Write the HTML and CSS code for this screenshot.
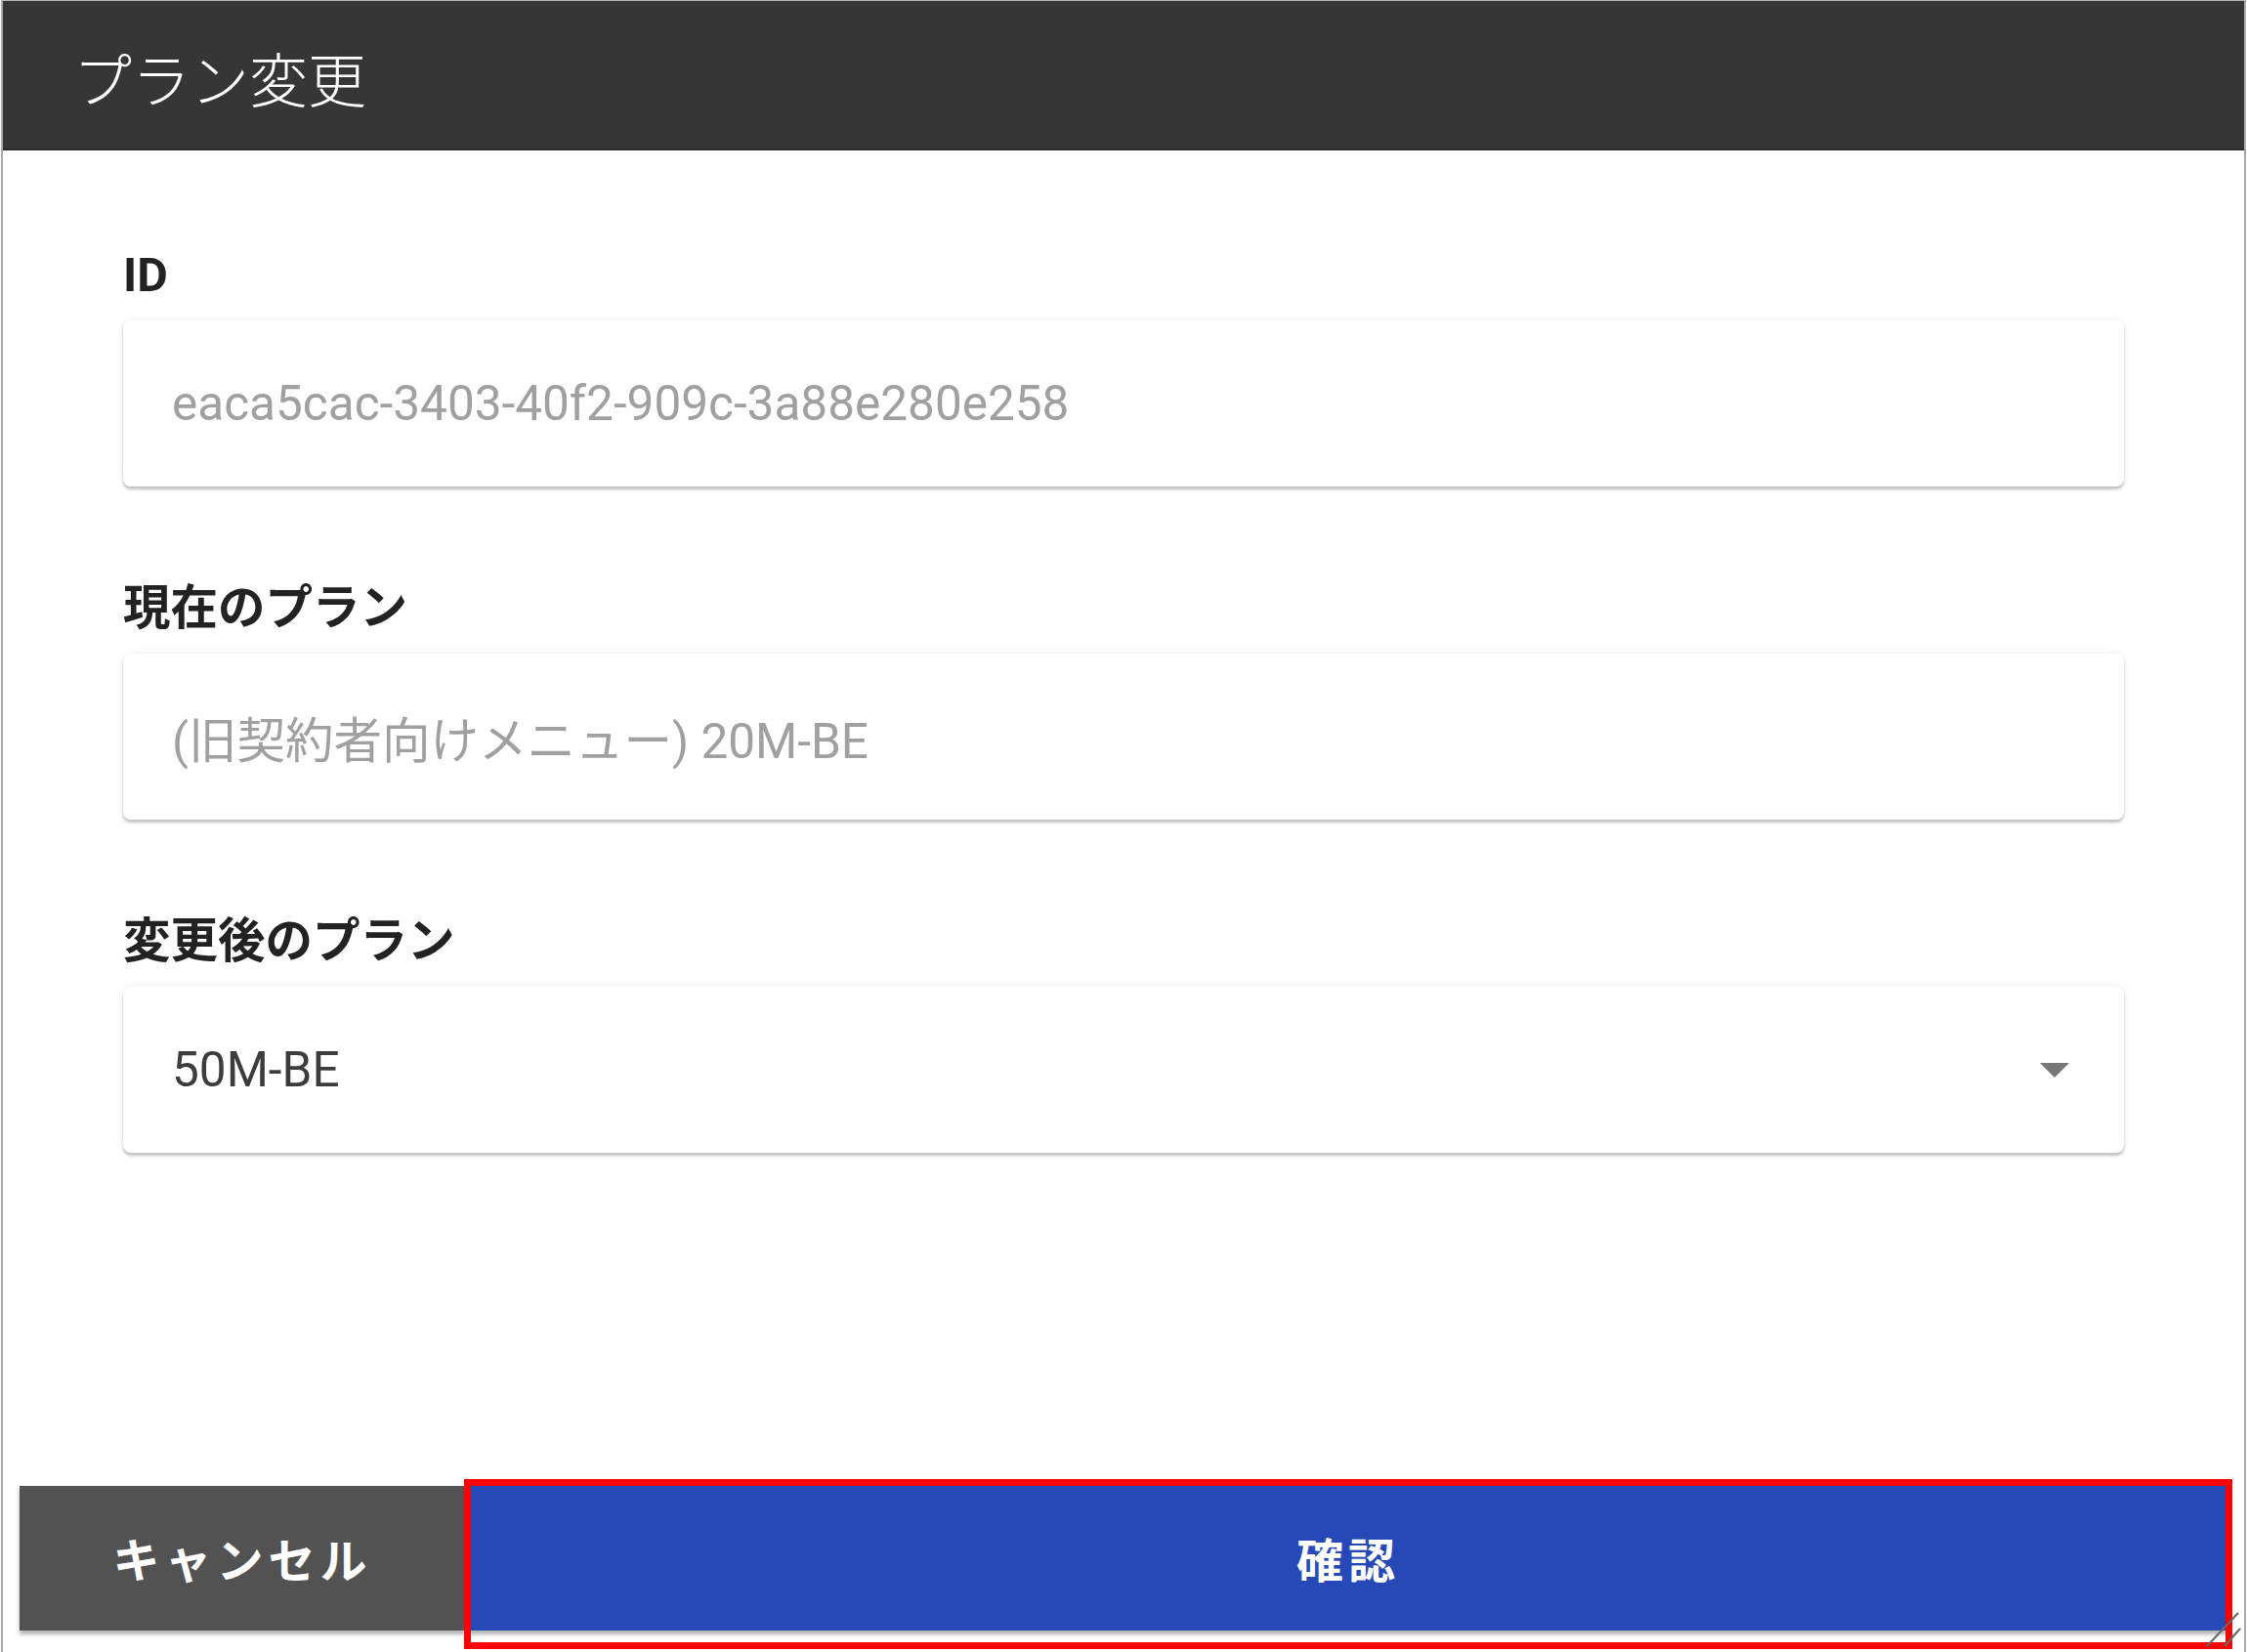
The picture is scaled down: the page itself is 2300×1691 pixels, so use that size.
FILE: index.html
```html
<!DOCTYPE html>
<html lang="ja">
<head>
    <meta charset="UTF-8">
    <meta name="viewport" content="width=device-width, initial-scale=1.0">
    <title>プラン変更</title>
    <link rel="stylesheet" href="styles.css">
</head>
<body>
    <div class="dialog">
        <div class="dialog-header">
            <h1>プラン変更</h1>
        </div>
        <div class="dialog-body">
            <label class="field-label">ID</label>
            <div class="field">
                <span class="field-value muted">eaca5cac-3403-40f2-909c-3a88e280e258</span>
            </div>
            <label class="field-label">現在のプラン</label>
            <div class="field">
                <span class="field-value muted">(旧契約者向けメニュー) 20M-BE</span>
            </div>
            <label class="field-label">変更後のプラン</label>
            <div class="field select">
                <span class="field-value">50M-BE</span>
                <span class="caret"></span>
            </div>
        </div>
        <div class="dialog-footer">
            <button class="btn btn-cancel">キャンセル</button>
            <button class="btn btn-confirm">確認</button>
        </div>
        <div class="highlight"></div>
        <svg class="grip" width="40" height="50" viewBox="0 0 40 50">
            <line x1="4" y1="48" x2="36" y2="14" stroke="#666" stroke-width="2"/>
            <line x1="22" y1="48" x2="38" y2="30" stroke="#666" stroke-width="2"/>
        </svg>
    </div>
</body>
</html>
```

FILE: styles.css
```css
* {
    box-sizing: border-box;
}
body {
    margin: 0;
    background: #fff;
    font-family: Roboto, "Noto Sans CJK JP", sans-serif;
}
.dialog {
    position: relative;
    display: flex;
    flex-direction: column;
    width: 2298px;
    height: 1691px;
    margin-left: 1px;
    border-left: 2px solid #aaa;
    border-right: 2px solid #aaa;
    border-top: 1px solid #bbb;
    background: #fff;
}
.dialog-header {
    height: 153px;
    background: #363636;
    border-bottom: 2px solid #2a2a2a;
    display: flex;
    align-items: center;
    padding-left: 72px;
}
.dialog-header h1 {
    margin: 0;
    color: #fff;
    font-family: "Noto Sans CJK JP", sans-serif;
    font-weight: 300;
    font-size: 60px;
    padding-top: 4px;
}
.dialog-body {
    display: flex;
    flex-direction: column;
    padding: 100px 123px 0 123px;
}
.field-label {
    height: 56px;
    line-height: 56px;
    font-size: 48.5px;
    font-weight: 700;
    color: #222;
    margin-bottom: 18px;
}
.field {
    display: flex;
    align-items: center;
    height: 170px;
    padding: 0 50px;
    background: #fff;
    border-radius: 8px;
    box-shadow: 0 3px 3px rgba(0, 0, 0, 0.22), 0 0 10px rgba(0, 0, 0, 0.07);
    margin-bottom: 97px;
}
.field:last-child {
    margin-bottom: 0;
}
.field-value {
    font-size: 49.5px;
    color: #3c3c3c;
}
.field-value.muted {
    color: #a0a0a0;
}
.select {
    justify-content: space-between;
    padding-right: 56px;
}
.caret {
    width: 0;
    height: 0;
    border-left: 15px solid transparent;
    border-right: 15px solid transparent;
    border-top: 15px solid #777;
}
.dialog-footer {
    margin-top: auto;
    display: flex;
    gap: 3px;
    padding: 0 16px 22px 17px;
}
.btn {
    height: 148px;
    border: none;
    padding-bottom: 4px;
    color: #fff;
    font-family: "Noto Sans CJK JP", sans-serif;
    font-weight: 700;
    font-size: 48px;
    letter-spacing: 5px;
    box-shadow: 0 4px 4px rgba(0, 0, 0, 0.3);
}
.btn-cancel {
    width: 456px;
    background: #525252;
}
.btn-confirm {
    flex: 1;
    background: #2649b7;
}
.highlight {
    position: absolute;
    left: 472px;
    top: 1513px;
    width: 1810px;
    height: 174px;
    border: 7px solid #f00;
}
.grip {
    position: absolute;
    right: 2px;
    bottom: 4px;
}
```
